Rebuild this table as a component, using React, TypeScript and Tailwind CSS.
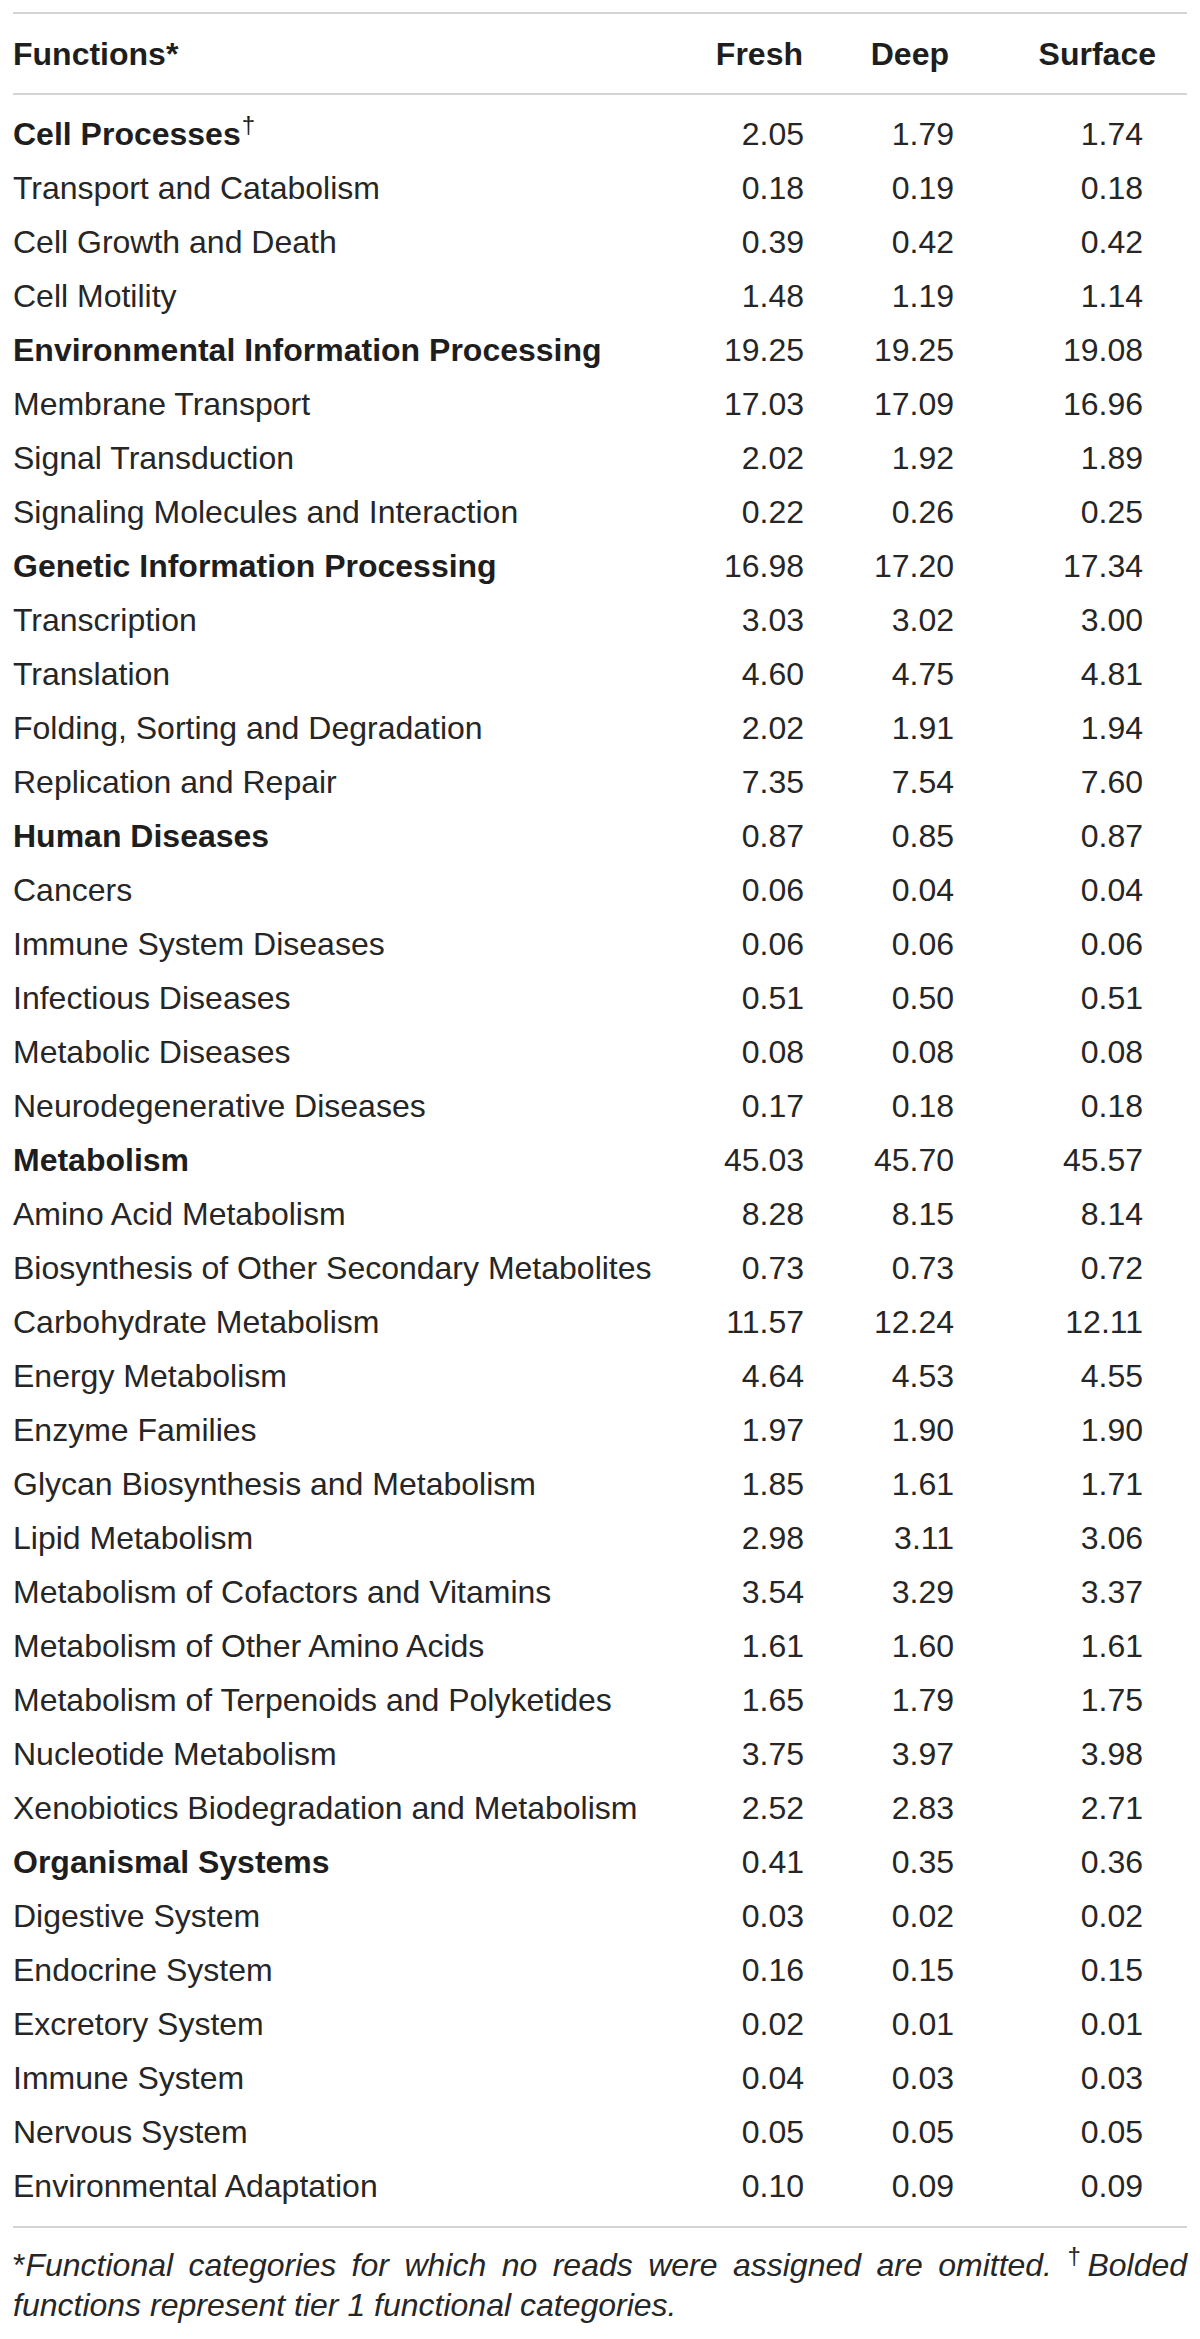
type Row = {
  name: string;
  fresh: string;
  deep: string;
  surface: string;
  tier1?: boolean;
  dagger?: boolean;
};

const rows: Row[] = [
  { name: "Cell Processes", fresh: "2.05", deep: "1.79", surface: "1.74", tier1: true, dagger: true },
  { name: "Transport and Catabolism", fresh: "0.18", deep: "0.19", surface: "0.18" },
  { name: "Cell Growth and Death", fresh: "0.39", deep: "0.42", surface: "0.42" },
  { name: "Cell Motility", fresh: "1.48", deep: "1.19", surface: "1.14" },
  { name: "Environmental Information Processing", fresh: "19.25", deep: "19.25", surface: "19.08", tier1: true },
  { name: "Membrane Transport", fresh: "17.03", deep: "17.09", surface: "16.96" },
  { name: "Signal Transduction", fresh: "2.02", deep: "1.92", surface: "1.89" },
  { name: "Signaling Molecules and Interaction", fresh: "0.22", deep: "0.26", surface: "0.25" },
  { name: "Genetic Information Processing", fresh: "16.98", deep: "17.20", surface: "17.34", tier1: true },
  { name: "Transcription", fresh: "3.03", deep: "3.02", surface: "3.00" },
  { name: "Translation", fresh: "4.60", deep: "4.75", surface: "4.81" },
  { name: "Folding, Sorting and Degradation", fresh: "2.02", deep: "1.91", surface: "1.94" },
  { name: "Replication and Repair", fresh: "7.35", deep: "7.54", surface: "7.60" },
  { name: "Human Diseases", fresh: "0.87", deep: "0.85", surface: "0.87", tier1: true },
  { name: "Cancers", fresh: "0.06", deep: "0.04", surface: "0.04" },
  { name: "Immune System Diseases", fresh: "0.06", deep: "0.06", surface: "0.06" },
  { name: "Infectious Diseases", fresh: "0.51", deep: "0.50", surface: "0.51" },
  { name: "Metabolic Diseases", fresh: "0.08", deep: "0.08", surface: "0.08" },
  { name: "Neurodegenerative Diseases", fresh: "0.17", deep: "0.18", surface: "0.18" },
  { name: "Metabolism", fresh: "45.03", deep: "45.70", surface: "45.57", tier1: true },
  { name: "Amino Acid Metabolism", fresh: "8.28", deep: "8.15", surface: "8.14" },
  { name: "Biosynthesis of Other Secondary Metabolites", fresh: "0.73", deep: "0.73", surface: "0.72" },
  { name: "Carbohydrate Metabolism", fresh: "11.57", deep: "12.24", surface: "12.11" },
  { name: "Energy Metabolism", fresh: "4.64", deep: "4.53", surface: "4.55" },
  { name: "Enzyme Families", fresh: "1.97", deep: "1.90", surface: "1.90" },
  { name: "Glycan Biosynthesis and Metabolism", fresh: "1.85", deep: "1.61", surface: "1.71" },
  { name: "Lipid Metabolism", fresh: "2.98", deep: "3.11", surface: "3.06" },
  { name: "Metabolism of Cofactors and Vitamins", fresh: "3.54", deep: "3.29", surface: "3.37" },
  { name: "Metabolism of Other Amino Acids", fresh: "1.61", deep: "1.60", surface: "1.61" },
  { name: "Metabolism of Terpenoids and Polyketides", fresh: "1.65", deep: "1.79", surface: "1.75" },
  { name: "Nucleotide Metabolism", fresh: "3.75", deep: "3.97", surface: "3.98" },
  { name: "Xenobiotics Biodegradation and Metabolism", fresh: "2.52", deep: "2.83", surface: "2.71" },
  { name: "Organismal Systems", fresh: "0.41", deep: "0.35", surface: "0.36", tier1: true },
  { name: "Digestive System", fresh: "0.03", deep: "0.02", surface: "0.02" },
  { name: "Endocrine System", fresh: "0.16", deep: "0.15", surface: "0.15" },
  { name: "Excretory System", fresh: "0.02", deep: "0.01", surface: "0.01" },
  { name: "Immune System", fresh: "0.04", deep: "0.03", surface: "0.03" },
  { name: "Nervous System", fresh: "0.05", deep: "0.05", surface: "0.05" },
  { name: "Environmental Adaptation", fresh: "0.10", deep: "0.09", surface: "0.09" },
];

function Rule() {
  return <div className="h-[2px] bg-[#d4d4d4]" />;
}

export default function App() {
  return (
    <div className="min-h-[2339px] bg-white pt-[12px] font-['Liberation_Sans',Arial,sans-serif] text-[32px] text-[#262626]">
      <div className="ml-[13px] w-[1174px]">
        <Rule />
        {/* header */}
        <div className="flex h-[79px] items-center font-bold text-[#1e1e1e]">
          <div className="flex-1">Functions*</div>
          <div className="w-[150px] pr-[1px] text-right">Fresh</div>
          <div className="w-[150px] pr-[5px] text-right">Deep</div>
          <div className="w-[233px] pr-[31px] text-right">Surface</div>
        </div>
        <Rule />

        {/* body */}
        <div className="pt-[12px] pb-[13px]">
          {rows.map((r) => (
            <div key={r.name} className="flex h-[54px] items-center leading-[54px]">
              <div className={r.tier1 ? "flex-1 font-bold text-[#1e1e1e]" : "flex-1"}>
                {r.name}
                {r.dagger && <sup className="ml-[1px] font-normal">†</sup>}
              </div>
              <div className="w-[150px] text-right">{r.fresh}</div>
              <div className="w-[150px] text-right">{r.deep}</div>
              <div className="w-[233px] pr-[44px] text-right">{r.surface}</div>
            </div>
          ))}
        </div>
        <Rule />

        {/* footnote */}
        <p className="pt-[17px] text-justify italic leading-[40px]">
          <span className="not-italic">*</span>Functional categories for which no reads were assigned are omitted.{" "}
          <sup className="not-italic">†</sup>Bolded functions represent tier 1 functional categories.
        </p>
      </div>
    </div>
  );
}
